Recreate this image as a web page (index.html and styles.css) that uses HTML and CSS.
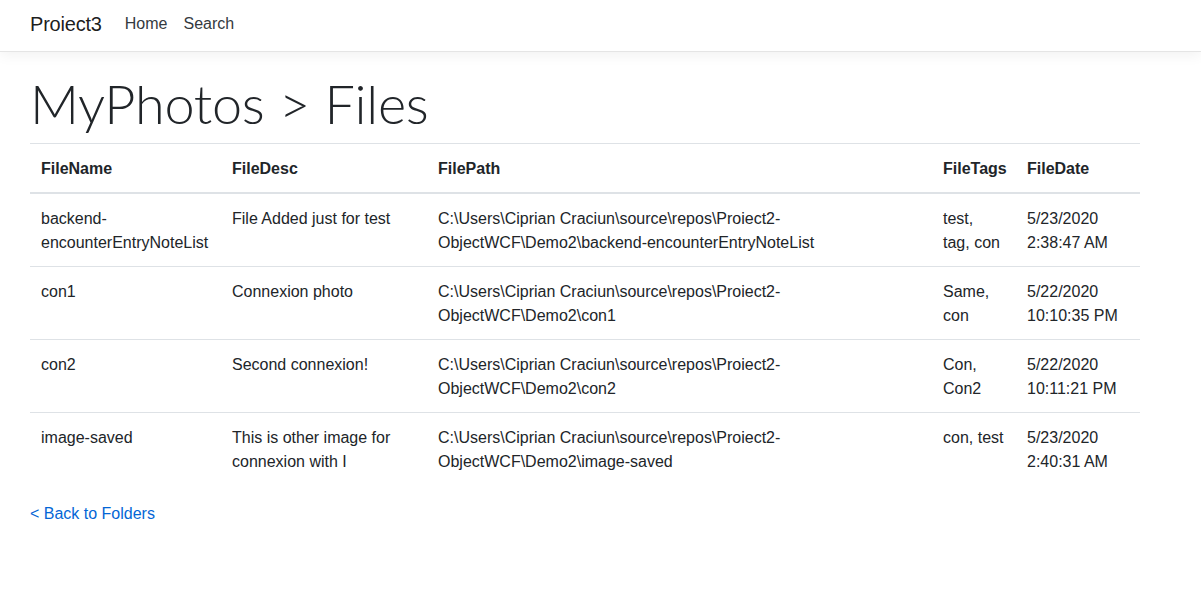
FILE: index.html
```html
<!DOCTYPE html>
<html lang="en">
<head>
<meta charset="utf-8">
<title>Files - Proiect3</title>
<link rel="stylesheet" href="styles.css">
</head>
<body>
<header class="navbar">
  <div class="nav-inner">
    <a class="brand" href="#">Proiect3</a>
    <nav class="nav-links">
      <a class="nav-link" href="#">Home</a>
      <a class="nav-link" href="#">Search</a>
    </nav>
  </div>
</header>
<main class="content">
  <h1 class="title">MyPhotos &gt; Files</h1>
  <table class="table">
    <colgroup>
      <col class="c-name">
      <col class="c-desc">
      <col class="c-path">
      <col class="c-tags">
      <col class="c-date">
    </colgroup>
    <thead>
      <tr>
        <th>FileName</th>
        <th>FileDesc</th>
        <th>FilePath</th>
        <th>FileTags</th>
        <th>FileDate</th>
      </tr>
    </thead>
    <tbody>
      <tr>
        <td>backend-<br>encounterEntryNoteList</td>
        <td>File Added just for test</td>
        <td>C:\Users\Ciprian Craciun\source\repos\Proiect2-<br>ObjectWCF\Demo2\backend-encounterEntryNoteList</td>
        <td>test,<br>tag, con</td>
        <td>5/23/2020<br>2:38:47 AM</td>
      </tr>
      <tr>
        <td>con1</td>
        <td>Connexion photo</td>
        <td>C:\Users\Ciprian Craciun\source\repos\Proiect2-<br>ObjectWCF\Demo2\con1</td>
        <td>Same,<br>con</td>
        <td>5/22/2020<br>10:10:35 PM</td>
      </tr>
      <tr>
        <td>con2</td>
        <td>Second connexion!</td>
        <td>C:\Users\Ciprian Craciun\source\repos\Proiect2-<br>ObjectWCF\Demo2\con2</td>
        <td>Con,<br>Con2</td>
        <td>5/22/2020<br>10:11:21 PM</td>
      </tr>
      <tr>
        <td>image-saved</td>
        <td>This is other image for<br>connexion with I</td>
        <td>C:\Users\Ciprian Craciun\source\repos\Proiect2-<br>ObjectWCF\Demo2\image-saved</td>
        <td>con, test</td>
        <td>5/23/2020<br>2:40:31 AM</td>
      </tr>
    </tbody>
  </table>
  <div class="back">
    <a class="back-link" href="#">&lt; Back to Folders</a>
  </div>
</main>
</body>
</html>
```

FILE: styles.css
```css
html, body {
  margin: 0;
  padding: 0;
}
body {
  font-family: "Liberation Sans", Arial, sans-serif;
  font-size: 16px;
  line-height: 1.5;
  color: #212529;
  background: #fff;
}
a {
  text-decoration: none;
}
.navbar {
  height: 51px;
  border-bottom: 1px solid #e5e5e5;
  box-shadow: 0 4px 12px rgba(0, 0, 0, 0.05);
  background: #fff;
}
.nav-inner {
  height: 100%;
  box-sizing: border-box;
  padding: 0 30px 3px 30px;
  display: flex;
  align-items: center;
}
.brand {
  font-size: 20px;
  color: rgba(0, 0, 0, 0.9);
  margin-right: 15px;
  letter-spacing: -0.2px;
}
.nav-links {
  display: flex;
}
.nav-link {
  color: #343a40;
  padding: 0 8px;
  font-size: 16px;
}
.content {
  padding: 16px 30px 0 30px;
  width: 1110px;
}
.title {
  font-family: Lato, "Liberation Sans", sans-serif;
  font-weight: 300;
  font-size: 54px;
  letter-spacing: -0.25px;
  line-height: 67px;
  height: 67px;
  padding-top: 2px;
  margin: 0 0 6px 0;
  color: #212529;
}
.table {
  width: 1110px;
  border-collapse: collapse;
  table-layout: fixed;
  margin-bottom: 16px;
}
.c-name { width: 191px; }
.c-desc { width: 206px; }
.c-path { width: 505px; }
.c-tags { width: 84px; }
.c-date { width: 124px; }
.table th,
.table td {
  padding: 13px 11px 11px 11px;
  text-align: left;
  vertical-align: top;
  border-top: 1px solid #dee2e6;
}
.table th {
  font-weight: 700;
  border-bottom: 2px solid #dee2e6;
}
.back {
  padding-top: 1px;
}
.back-link {
  color: #0366d6;
}
```
